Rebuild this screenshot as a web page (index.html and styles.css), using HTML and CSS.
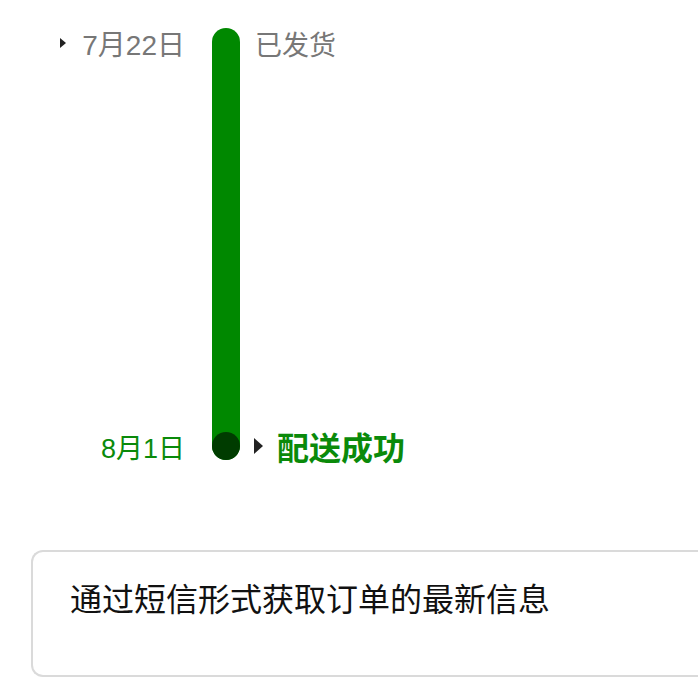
FILE: index.html
```html
<!DOCTYPE html>
<html>
<head>
  <meta charset="utf-8">
  <title>物流跟踪</title>
  <link rel="stylesheet" href="styles.css">
</head>
<body>
  <!-- Timeline -->
  <div class="track">
    <div class="date first">
      <span class="arrow"></span>
      <span>7月22日</span>
    </div>
    <div class="bar">
      <div class="dot"></div>
    </div>
    <div class="status">已发货</div>

    <div class="date done">8月1日</div>
    <div class="status done">
      <span class="arrow big"></span>
      <span>配送成功</span>
    </div>
  </div>

  <!-- SMS box -->
  <div class="notice">通过短信形式获取订单的最新信息</div>
</body>
</html>
```

FILE: styles.css
```css
body {
  margin: 0;
  padding-top: 28px;
  overflow: hidden;
  background-color: white;
  font-family: 'Liberation Sans', 'Noto Sans CJK SC', sans-serif;
}

.track {
  display: grid;
  grid-template-columns: 212px 28px 1fr;
  grid-template-rows: 30px 374px 28px;
}

.date {
  grid-column: 1;
  display: flex;
  align-items: center;
  justify-content: flex-end;
  padding-right: 27px;
  font-size: 28px;
  color: #777;
}

.date.first {
  grid-row: 1;
  gap: 16px;
}

.date.done {
  grid-row: 3;
  font-size: 27px;
  color: #0a8a0a;
}

.bar {
  grid-column: 2;
  grid-row: 1 / 4;
  display: flex;
  flex-direction: column;
  justify-content: flex-end;
  background-color: #008800;
  border-radius: 14px;
}

.dot {
  height: 28px;
  border-radius: 50%;
  background-color: #003c00;
}

.status {
  grid-column: 3;
  grid-row: 1;
  display: flex;
  align-items: center;
  padding-left: 15px;
  font-size: 27px;
  color: #777;
}

.status.done {
  grid-row: 3;
  gap: 14px;
  padding-left: 14px;
  font-size: 32px;
  font-weight: bold;
  color: #0a8a0a;
}

/* little black arrows */
.arrow {
  width: 0;
  height: 0;
  border-left: 6px solid #222;
  border-top: 5px solid transparent;
  border-bottom: 5px solid transparent;
}

.arrow.big {
  border-left-width: 9px;
  border-top-width: 8px;
  border-bottom-width: 8px;
}

/* box runs off the right edge, so no right border */
.notice {
  margin-top: 90px;
  margin-left: 31px;
  height: 127px;
  box-sizing: border-box;
  padding: 28px 0 0 37px;
  border: 2px solid #dadada;
  border-right: none;
  border-radius: 12px 0 0 12px;
  font-size: 32px;
  line-height: 40px;
  color: #111;
}
```
